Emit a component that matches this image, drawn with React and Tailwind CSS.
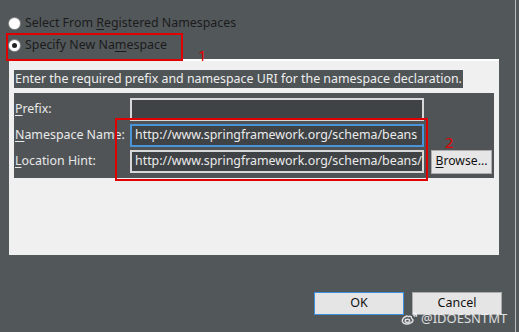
export default function App() {
  return (
    <div
      className="relative w-[519px] h-[332px] overflow-hidden bg-[#52575a] text-[12.4px] leading-none"
      style={{ fontFamily: '"Noto Sans", "Liberation Sans", sans-serif' }}
    >
      {/* right edge line */}
      <div className="absolute right-[3px] top-0 h-full w-[1px] bg-[#b9bcbe]" />

      <div className="flex flex-col pt-[12px] pl-[9px] gap-0">
        <Radio label="Select From " ul="R" rest="egistered Namespaces" />
        <Radio checked label="Specify New Na" ul="m" rest="espace" />
      </div>

      <div className="mt-[3px] ml-[9px] w-[490px] h-[196px] border-t-2 border-white bg-[#f0f0f0] px-[5px] pt-[9px]">
        <div className="flex">
          <span className="bg-[#4f5457] text-[#eeeeee] h-[18px] flex items-center pl-[1px] pr-[1px] whitespace-nowrap">
            Enter the required prefix and namespace URI for the namespace declaration.
          </span>
        </div>

        <div className="mt-[5px] h-[85px] bg-[#505457] flex flex-col pt-[5px] gap-[3px]">
          <Row label="P" rest="refix:" />
          <Row label="N" rest="amespace Name:" value="http://www.springframework.org/schema/beans" focused />
          <Row label="L" rest="ocation Hint:" value="http://www.springframework.org/schema/beans/s" browse />
        </div>
      </div>

      <div className="flex justify-end gap-[8px] pr-[17px] mt-[37px]">
        <button className="w-[90px] h-[23px] bg-[#e5e5e5] border border-[#3c8fdc] text-[#111] text-[12.5px]">
          OK
        </button>
        <button className="w-[90px] h-[23px] bg-[#e5e5e5] border border-[#acacac] text-[#111] text-[12.5px]">
          Cancel
        </button>
      </div>

      {/* annotations */}
      <div className="absolute left-[6px] top-[33px] w-[177px] h-[28px] border-2 border-[#e00000]" />
      <div className="absolute left-[198px] top-[48px] text-[#e00000] text-[15px]">1</div>
      <div className="absolute left-[115px] top-[118px] w-[313px] h-[63px] border-2 border-[#e00000]" />
      <div className="absolute left-[445px] top-[135px] text-[#e00000] text-[15px]">2</div>

      {/* watermark */}
      <div className="absolute left-[400px] top-[311px] flex items-center gap-[2px] text-white/80 text-[13px] whitespace-nowrap">
        <svg width="19" height="15" viewBox="0 0 20 16" fill="none" stroke="currentColor" strokeWidth="1.6">
          <path d="M8 5C4 6 1.5 9 2.5 11.5 3.5 14 8 14.5 11 13 14 11.5 14.5 9 12.5 8.2 11.6 7.8 12.2 6.5 11.6 6 10.5 5.2 9 5.6 8 6.2" />
          <ellipse cx="7.8" cy="10.5" rx="2.4" ry="1.8" />
          <path d="M14 2.5C16 2.5 17.5 4 17.5 6" />
          <path d="M14 4.5C15 4.5 15.7 5.2 15.7 6" />
        </svg>
        <span>@IDOESNTMT</span>
      </div>
    </div>
  )
}

function Radio({ checked, label, ul, rest }) {
  return (
    <div className="h-[22px] flex items-center gap-[5px] text-[#1c1c1c]">
      <span className="w-[11px] h-[11px] rounded-full bg-white flex items-center justify-center shadow-[0_0_0_1px_#888]">
        {checked && <span className="w-[5px] h-[5px] rounded-full bg-[#222]" />}
      </span>
      <span className="whitespace-nowrap">
        {label}
        <span className="underline underline-offset-2">{ul}</span>
        {rest}
      </span>
    </div>
  )
}

function Row({ label, rest, value, focused, browse }) {
  return (
    <div className="flex items-center h-[23px]">
      <span className="w-[116px] shrink-0 text-[#e9e9e9] pl-[1px] whitespace-nowrap">
        <span className="underline underline-offset-2">{label}</span>
        {rest}
      </span>
      <div
        className={`w-[294px] shrink-0 h-[23px] bg-[#3f4346] border-2 flex items-center pl-[3px] text-[#ebebeb] overflow-hidden whitespace-nowrap ${
          focused ? 'border-[#4a95da]' : 'border-[#d8d8d8]'
        }`}
      >
        {value}
      </div>
      {browse && (
        <button className="ml-[7px] w-[61px] h-[24px] shrink-0 bg-[#e6e6e6] border border-[#adadad] text-[#111] text-[12.2px] whitespace-nowrap">
          <span className="underline underline-offset-2">B</span>rowse...
        </button>
      )}
    </div>
  )
}
